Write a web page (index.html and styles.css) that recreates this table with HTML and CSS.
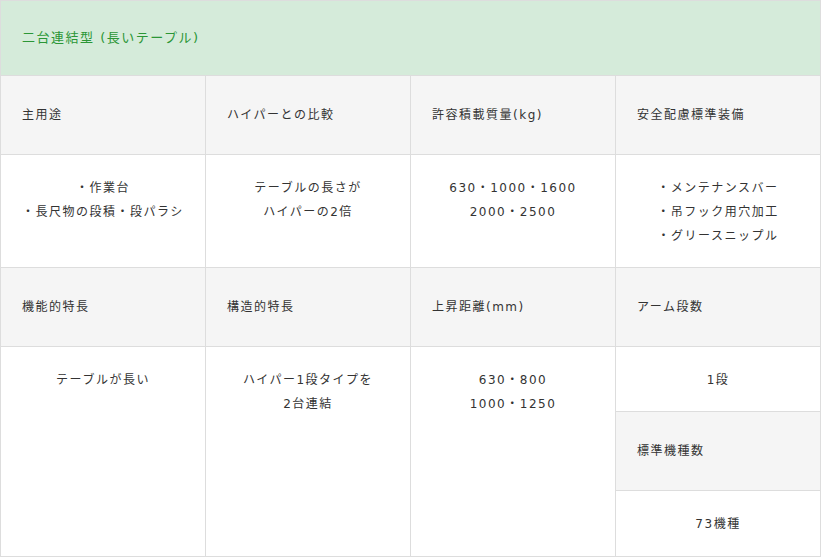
FILE: index.html
```html
<!DOCTYPE html>
<html lang="ja">
<head>
<meta charset="utf-8">
<link rel="stylesheet" href="styles.css">
</head>
<body>
<table class="spec">
  <colgroup><col class="c"><col class="c"><col class="c"><col class="c"></colgroup>
  <tr><th class="title" colspan="4">二台連結型 (長いテープル)</th></tr>
  <tr>
    <th>主用途</th><th>ハイパーとの比較</th><th>許容積載質量(kg)</th><th>安全配慮標準装備</th>
  </tr>
  <tr>
    <td>・作業台<br>・長尺物の段積・段パラシ</td>
    <td>テーブルの長さが<br>ハイパーの2倍</td>
    <td>630・1000・1600<br>2000・2500</td>
    <td>・メンテナンスバー<br>・吊フック用穴加工<br>・グリースニップル</td>
  </tr>
  <tr>
    <th>機能的特長</th><th>構造的特長</th><th>上昇距離(mm)</th><th>アーム段数</th>
  </tr>
  <tr>
    <td rowspan="3">テーブルが長い</td>
    <td rowspan="3">ハイパー1段タイプを<br>2台連結</td>
    <td rowspan="3">630・800<br>1000・1250</td>
    <td>1段</td>
  </tr>
  <tr><th>標準機種数</th></tr>
  <tr><td class="last">73機種</td></tr>
</table>
</body>
</html>
```
FILE: styles.css
```css
html, body {
  margin: 0;
  padding: 0;
  background: #fff;
}
.spec {
  width: 821px;
  border-collapse: collapse;
  table-layout: fixed;
  font-family: "DejaVu Sans", "Noto Sans CJK JP", sans-serif;
  font-size: 12px;
  line-height: 24px;
  letter-spacing: 1.5px;
  color: #333;
}
.spec th, .spec td {
  border: 1px solid #dddddd;
  padding: 21px 8px 19px;
  vertical-align: top;
}
.spec th {
  background: #f5f5f5;
  font-weight: normal;
  text-align: left;
  padding: 27px 21px 27px 21px;
  vertical-align: middle;
}
.spec th.title {
  background: #d5ebda;
  color: #2b9636;
  font-size: 13px;
  padding: 25px 21px;
}
.spec td {
  text-align: center;
}
.spec td.last {
  padding-bottom: 20px;
}
```
